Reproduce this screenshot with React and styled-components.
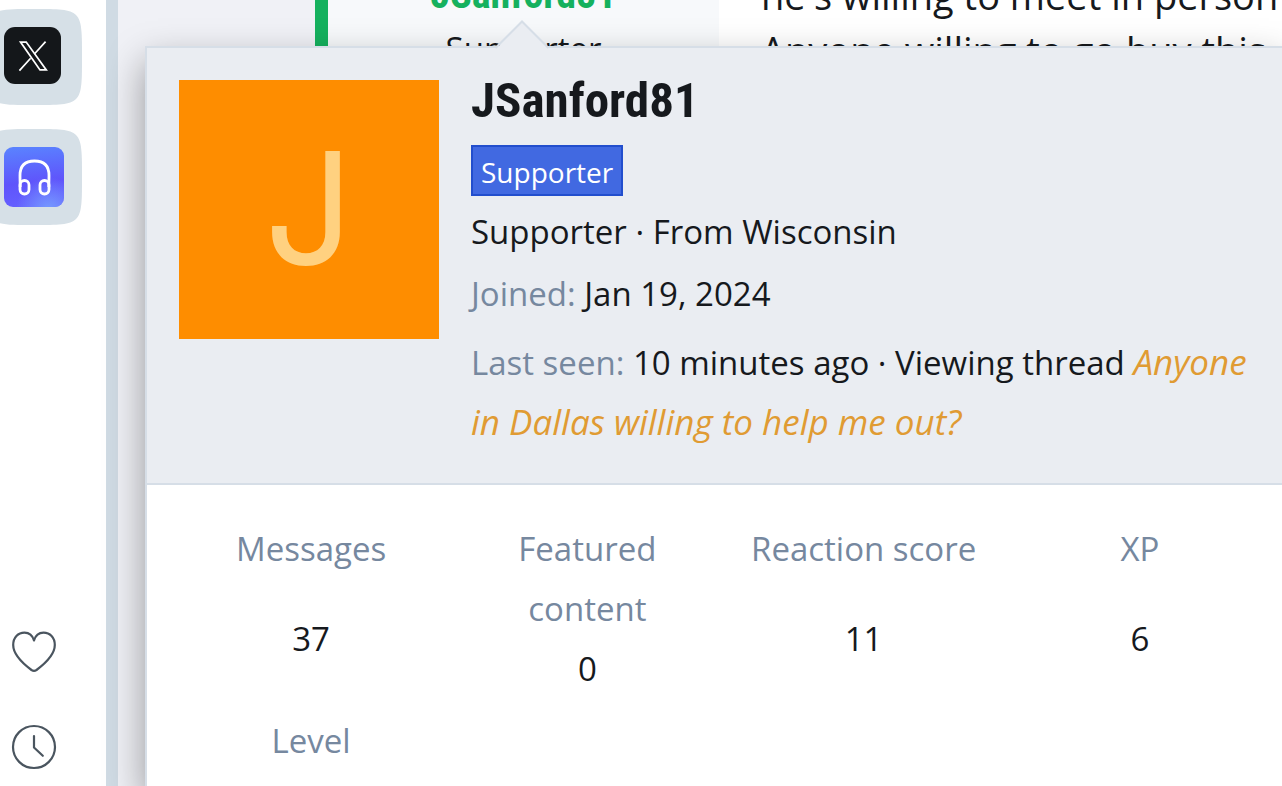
import React from "react";
import styled, { createGlobalStyle } from "styled-components";

const GlobalStyle = createGlobalStyle`
  *, *::before, *::after { box-sizing: border-box; }
  body {
    margin: 0;
    background: #f0f1f6;
    color: #16191d;
    font: 400 33px/60px "Open Sans", "Noto Sans", sans-serif;
  }
`;

const condensed = `"Roboto Condensed", "Liberation Sans Narrow", "Liberation Sans", sans-serif`;

const Page = styled.div`
  position: relative;
  display: flex;
  height: 100vh;
  overflow: hidden;
`;

const Sidebar = styled.nav`
  flex: none;
  display: flex;
  flex-direction: column;
  justify-content: space-between;
  width: 118px;
  padding: 9px 0 15px;
  background: #fff;
  border-right: 12px solid #d0dbe4;
  overflow: hidden;
`;

const SideGroup = styled.div`
  display: flex;
  flex-direction: column;
  align-items: center;
  width: 96px;
  margin-left: -14px;
  gap: ${(p) => p.$gap}px;
`;

const SideButton = styled.button`
  display: block;
  width: ${(p) => p.$size}px;
  height: ${(p) => p.$size}px;
  padding: 0;
  border: 0;
  background: none;
  cursor: pointer;

  svg { display: block; width: 100%; height: 100%; }
`;

const Main = styled.main`
  flex: 1;
  min-width: 0;
  padding-left: 197px;
`;

const Post = styled.article`
  display: flex;
  margin-top: -32px;
  border-left: 13px solid #15b15e;
`;

const PostUser = styled.div`
  flex: none;
  width: 391px;
  padding-top: 7px;
  background: #f7f9fb;
  text-align: center;
`;

const PostUserName = styled.a`
  display: block;
  margin-bottom: 4px;
  font: 700 40px/40px ${condensed};
  color: #15b15e;
  text-decoration: none;
`;

const PostUserTitle = styled.div``;

const PostBody = styled.div`
  flex: 1;
  min-width: 0;
  padding-left: 42px;
  background: #fff;
  font-size: 38px;
  line-height: 55px;
  white-space: nowrap;
  overflow: hidden;
`;

const Card = styled.section`
  position: absolute;
  top: 46px;
  left: 145px;
  right: 0;
  bottom: 0;
  background: #fff;
  border: solid #d6dee7;
  border-width: 2px 0 0 2px;
  box-shadow: 0 16px 36px rgba(0, 0, 0, 0.38);
`;

const Arrow = styled.svg`
  position: absolute;
  top: -28px;
  left: 347px;
  width: 56px;
  height: 30px;
`;

const CardHeader = styled.header`
  display: flex;
  gap: 32px;
  padding: 32px 8px 30px 32px;
  background: #eaedf2;
  border-bottom: 2px solid #d6dee7;
`;

const Avatar = styled.a`
  flex: none;
  display: flex;
  align-items: center;
  justify-content: center;
  width: 260px;
  height: 259px;
  padding-bottom: 4px;
  background: #fe8d00;
  color: #ffd180;
  font: 400 156px/1 Inter, "Liberation Sans", sans-serif;
  text-decoration: none;
`;

const Info = styled.div`
  flex: 1;
  min-width: 0;
`;

const Name = styled.h1`
  margin: 0;
  font: 700 49px/42px ${condensed};
`;

const Badge = styled.em`
  display: table;
  margin: 23px 0 6px;
  padding: 3px 8px 0;
  border: 2px solid #224ecd;
  background: #4169e1;
  color: #fff;
  font-size: 28px;
  font-style: normal;
  line-height: 44px;
`;

const Line = styled.div`
  margin-bottom: ${(p) => p.$gap || 0}px;
`;

const Label = styled.span`
  color: #76889f;
`;

const ThreadLink = styled.a`
  color: #e09b33;
  font-size: 35px;
  line-height: 1;
  font-style: italic;
  text-decoration: none;
`;

const Stats = styled.div`
  display: grid;
  grid-template-columns: repeat(4, 1fr);
  row-gap: 12px;
  padding: 34px 4px 0 26px;
`;

const Stat = styled.dl`
  display: flex;
  flex-direction: column;
  margin: 0;
  padding: 0 20px;
  text-align: center;

  dt {
    max-width: 232px;
    margin: 0 auto;
    color: #76889f;
  }
  dd {
    flex: 1;
    display: flex;
    align-items: center;
    justify-content: center;
    margin: 0;
  }
`;

const TILE = "M0 48C0 0 0 0 48 0S96 0 96 48 96 96 48 96 0 96 0 48Z";

function XTile() {
  return (
    <svg viewBox="0 0 96 96" aria-hidden="true">
      <path d={TILE} fill="#d6e0e7" />
      <rect x="18" y="18" width="57" height="57" rx="11" fill="#14171a" />
      <g fill="none" stroke="#fff" strokeWidth="1.7">
        <path d="M34.500 33.100h5.700L60.300 60.900h-6.300z" />
        <path d="M59.600 32.600L48.400 45M44.600 49.200L33.400 61.600" />
      </g>
    </svg>
  );
}

function HeadphonesTile() {
  return (
    <svg viewBox="0 0 96 96" aria-hidden="true">
      <defs>
        <linearGradient id="hp-base" x1="0.3" y1="0" x2="0.4" y2="1">
          <stop offset="0" stopColor="#5a82ff" />
          <stop offset="0.6" stopColor="#5f54fb" />
          <stop offset="1" stopColor="#6560ff" />
        </linearGradient>
        <radialGradient id="hp-glow" cx="0.75" cy="1.05" r="0.55">
          <stop offset="0" stopColor="#769bff" />
          <stop offset="1" stopColor="#769bff" stopOpacity="0" />
        </radialGradient>
      </defs>
      <path d={TILE} fill="#d6e0e7" />
      <rect x="18" y="18" width="60" height="60" rx="9" fill="url(#hp-base)" />
      <rect x="18" y="18" width="60" height="60" rx="9" fill="url(#hp-glow)" />
      <g fill="none" stroke="#fff" strokeWidth="2.8">
        <path d="M34.200 58C34.200 54 34 51 34 46.500C34 37 39 32 48.500 32S63 37 63 46.500C63 51 62.800 54 62.800 58" />
        <rect x="34" y="51.500" width="9" height="13.500" rx="4.400" />
        <rect x="54" y="51.500" width="9" height="13.500" rx="4.400" />
      </g>
    </svg>
  );
}

function HeartIcon() {
  return (
    <svg viewBox="0 0 48 48" fill="none" stroke="#4a555f" strokeWidth="2.200" strokeLinejoin="round" strokeLinecap="round" aria-hidden="true">
      <path d="M24 13.500C22.500 8.500 19 5.700 14.500 5.700C8 5.700 3.200 10.500 3.200 18C3.200 27.500 11.500 35.500 21.500 43Q24 44.600 26.500 43C36.500 35.500 44.800 27.500 44.800 18C44.800 10.500 40 5.700 33.500 5.700C29 5.700 25.500 8.500 24 13.500Z" />
    </svg>
  );
}

function ClockIcon() {
  return (
    <svg viewBox="0 0 48 48" fill="none" stroke="#4a555f" strokeWidth="2.200" strokeLinecap="round" strokeLinejoin="round" aria-hidden="true">
      <circle cx="24" cy="24" r="21" />
      <path d="M24 13V24.500L32.800 32.800" />
    </svg>
  );
}

const STATS = [
  ["Messages", "37"],
  ["Featured content", "0"],
  ["Reaction score", "11"],
  ["XP", "6"],
  ["Level", ""],
];

export default function App() {
  return (
    <Page>
      <GlobalStyle />
      <Sidebar>
        <SideGroup $gap={24}>
          <SideButton $size={96} aria-label="X"><XTile /></SideButton>
          <SideButton $size={96} aria-label="Player"><HeadphonesTile /></SideButton>
        </SideGroup>
        <SideGroup $gap={48}>
          <SideButton $size={48} aria-label="Favourites"><HeartIcon /></SideButton>
          <SideButton $size={48} aria-label="History"><ClockIcon /></SideButton>
        </SideGroup>
      </Sidebar>

      <Main>
        <Post>
          <PostUser>
            <PostUserName href="#user">JSanford81</PostUserName>
            <PostUserTitle>Supporter</PostUserTitle>
          </PostUser>
          <PostBody>
            he's willing to meet in person
            <br />
            Anyone willing to go buy this
          </PostBody>
        </Post>
      </Main>

      <Card>
        <Arrow viewBox="0 0 56 30" aria-hidden="true">
          <path d="M1 30L28 1L55 30Z" fill="#eaedf2" />
          <path d="M1.500 28L28 1.500L54.500 28" fill="none" stroke="#d6dee7" strokeWidth="2" />
        </Arrow>
        <CardHeader>
          <Avatar href="#user">J</Avatar>
          <Info>
            <Name>JSanford81</Name>
            <Badge>Supporter</Badge>
            <Line $gap={2}>Supporter · From Wisconsin</Line>
            <Line $gap={9}><Label>Joined:</Label> Jan 19, 2024</Line>
            <Line>
              <Label>Last seen:</Label> 10 minutes ago · Viewing thread{" "}
              <ThreadLink href="#thread">Anyone in Dallas willing to help me out?</ThreadLink>
            </Line>
          </Info>
        </CardHeader>
        <Stats>
          {STATS.map(([label, value]) => (
            <Stat key={label}>
              <dt>{label}</dt>
              <dd>{value}</dd>
            </Stat>
          ))}
        </Stats>
      </Card>
    </Page>
  );
}
